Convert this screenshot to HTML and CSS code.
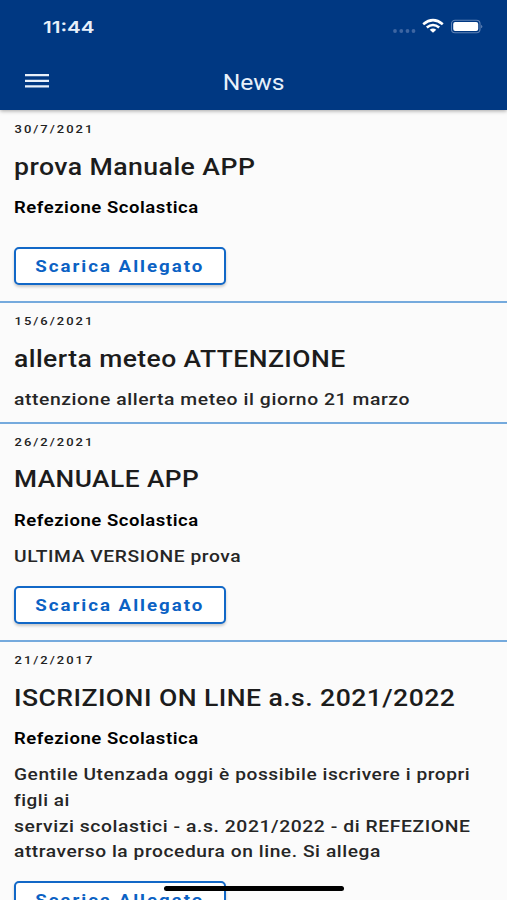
FILE: index.html
```html
<!DOCTYPE html>
<html lang="it">
<head>
<meta charset="utf-8">
<title>News</title>
<link rel="stylesheet" href="styles.css">
</head>
<body>
<div class="app">
  <header class="header">
    <div class="status">
      <span class="clock">11:44</span>
      <svg class="status-icons" width="94" height="20" viewBox="0 0 94 20">
        <g fill="#3e66a2"><circle cx="5" cy="14" r="1.9"/><circle cx="11.3" cy="14" r="1.9"/><circle cx="17.5" cy="14" r="1.9"/><circle cx="23.5" cy="14" r="1.9"/></g>
        <g fill="none" stroke="#fff" stroke-width="2.6"><path d="M33.2 7.2Q43 -0.8 52.8 7.2"/><path d="M36.8 10.6Q43 5.4 49.2 10.6"/></g>
        <path d="M39.7 12.8Q43 10.4 46.3 12.8L43 15.7Z" fill="#fff"/>
        <rect x="61.5" y="3.3" width="28.5" height="12.4" rx="3.5" fill="none" stroke="#5f82b6" stroke-width="1.1"/>
        <rect x="63.2" y="5" width="25" height="9" rx="2" fill="#fff"/>
        <path d="M91.3 7.7Q93.3 9.5 91.3 11.3Z" fill="#7e99c3"/>
      </svg>
    </div>
    <nav class="toolbar">
      <svg class="menu" width="24" height="14" viewBox="0 0 24 14"><path d="M0 1.2H24M0 6.8H24M0 12.4H24" stroke="#e8f0fa" stroke-width="2.3"/></svg>
      <h1 class="page-title"><span>News</span></h1>
    </nav>
  </header>
  <main class="list">
    <article class="card">
      <time class="date">30/7/2021</time>
      <h2 class="title t1">prova Manuale APP</h2>
      <h3 class="category">Refezione Scolastica</h3>
      <button class="download spaced"><span>Scarica Allegato</span></button>
    </article>
    <article class="card compact">
      <time class="date">15/6/2021</time>
      <h2 class="title t2">allerta meteo ATTENZIONE</h2>
      <p class="text b2">attenzione allerta meteo il giorno 21 marzo</p>
    </article>
    <article class="card">
      <time class="date">26/2/2021</time>
      <h2 class="title t3">MANUALE APP</h2>
      <h3 class="category">Refezione Scolastica</h3>
      <p class="text b3">ULTIMA VERSIONE prova</p>
      <button class="download"><span>Scarica Allegato</span></button>
    </article>
    <article class="card">
      <time class="date">21/2/2017</time>
      <h2 class="title t4">ISCRIZIONI ON LINE a.s. 2021/2022</h2>
      <h3 class="category">Refezione Scolastica</h3>
      <p class="text"><span class="l1">Gentile Utenzada oggi è possibile iscrivere i propri</span> <span class="l2">figli ai</span> <span class="l3">servizi scolastici - a.s. 2021/2022 - di REFEZIONE</span> <span class="l4">attraverso la procedura on line. Si allega</span></p>
      <button class="download"><span>Scarica Allegato</span></button>
    </article>
  </main>
  <div class="home-bar"></div>
</div>
</body>
</html>
```

FILE: styles.css
```css
* { box-sizing: border-box; }
body { margin: 0; font-family: Roboto, "Liberation Sans", sans-serif; background: #fbfbfb; }
.app { position: relative; height: 900px; overflow: hidden; }
.header { height: 110.4px; background: #003882; box-shadow: 0 1px 4px rgba(0,0,0,.35); color: #e8f0fa; }
.status { display: flex; justify-content: space-between; align-items: center; height: 54px; padding: 0 18px 0 43px; }
.status-icons { flex: none; margin: 0 5px 0 0; }
.clock { font-family: Inter, sans-serif; font-size: 16.5px; font-weight: 600; transform: scaleX(1.25); transform-origin: left; }
.toolbar { display: grid; grid-template-columns: 24px 1fr 24px; align-items: center; height: 54px; padding: 0 25px; }
.page-title { margin: 3px 0 0; text-align: center; font-size: 22px; font-weight: 400; line-height: 30px; }
.page-title span { display: inline-block; transform: scaleX(1.12); }
.list { padding-top: .6px; }
.card { display: flex; flex-direction: column; align-items: flex-start; padding: 9px 14px 16px; border-bottom: 2px solid #75aadd; }
.card.compact { padding-bottom: 8.8px; }
.date, .title, .category, .text, .text span { white-space: nowrap; transform-origin: left; }
.date { font-size: 11px; font-weight: 500; line-height: 20px; letter-spacing: 1.7px; color: #222; transform: translateX(.5px) scaleX(1.18); }
.title { margin: 8.9px 0 9.5px; font-size: 24px; font-weight: 500; line-height: 36px; color: #1c1c1c; letter-spacing: .4px; }
.t1 { transform: scaleX(1.109); }
.t2 { transform: scaleX(1.103); }
.t3 { transform: scaleX(1.097); }
.t4 { transform: scaleX(1.107); }
.category { margin: 0; font-size: 17px; font-weight: 600; line-height: 26px; color: #000; letter-spacing: .5px; transform: scaleX(1.088); }
.text { margin: 11px 0 0; font-size: 17px; font-weight: 500; line-height: 25.6px; color: #262626; letter-spacing: .5px; }
.compact .text { margin-top: .4px; }
.text span { display: block; width: max-content; }
.b2 { transform: scaleX(1.137); }
.b3 { transform: scaleX(1.132); }
.l1 { transform: scaleX(1.125); }
.l2 { transform: scaleX(1.11); }
.l3 { transform: scaleX(1.137); }
.l4 { transform: scaleX(1.128); }
.download { width: 211.5px; height: 38.5px; margin: 16px 0 0; padding: 0; border: 2px solid #1268c7; border-radius: 5px; background: #fff; color: #0b62c4; box-shadow: 0 2px 3px rgba(0,0,0,.2); font: 700 17px/34px Roboto, sans-serif; letter-spacing: 1.8px; white-space: nowrap; }
.download.spaced { margin-top: 26.5px; }
.download span { display: inline-block; transform: scaleX(1.1); }
.home-bar { position: absolute; left: 164px; bottom: 9px; width: 180px; height: 5px; border-radius: 3px; background: #000; }
```
